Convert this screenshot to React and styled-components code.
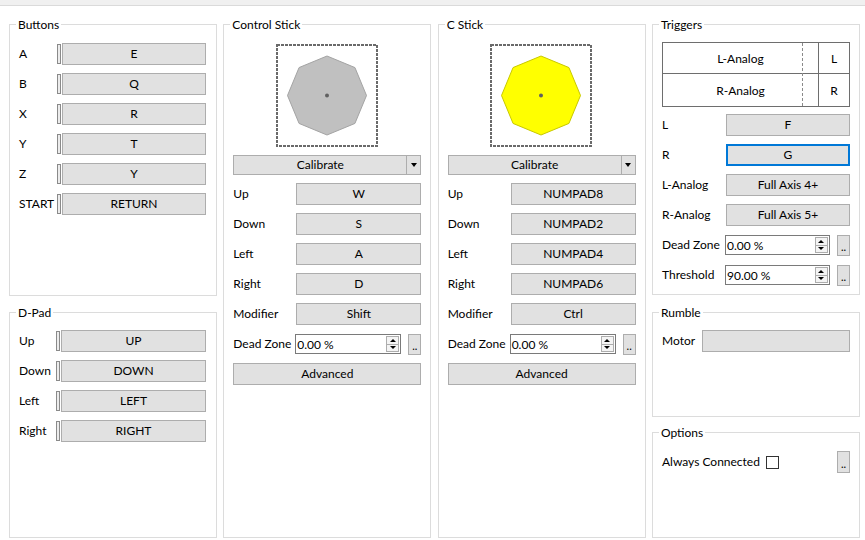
import React from "react";
import styled, { createGlobalStyle } from "styled-components";

const Global = createGlobalStyle`
  html, body { margin: 0; padding: 0; background: #fff; }
  body {
    font-family: Lato, "Liberation Sans", Arial, sans-serif;
    font-size: 12px;
    color: #000;
  }
`;

const Page = styled.div`
  width: 865px;
  height: 540px;
  background: #fff;
  overflow: hidden;
  display: flex;
  flex-direction: column;
`;

const TopBand = styled.div`
  height: 5px;
  flex: none;
  background: #f0f0f0;
  border-bottom: 1px solid #dadada;
`;

const Columns = styled.div`
  display: grid;
  grid-template-columns: repeat(4, 208px);
  column-gap: 6.33px;
  padding: 18px 0 0 9px;
  height: 514px;
`;

const Column = styled.div`
  display: flex;
  flex-direction: column;
  min-height: 0;
`;

const GroupBox = styled.section`
  position: relative;
  box-sizing: border-box;
  border: 1px solid #dcdcdc;
  margin-top: ${(p) => p.$mt || 0}px;
  padding: ${(p) => p.$pad || "18px 9px 0 9px"};
  ${(p) => (p.$h ? `height: ${p.$h}px; flex: none;` : "flex: 1;")}
  display: flex;
  flex-direction: column;
`;

const Title = styled.span`
  position: absolute;
  top: -8px;
  left: 6px;
  padding: 0 2px;
  background: #fff;
  line-height: 15px;
  white-space: nowrap;
`;

const ButtonGrid = styled.div`
  display: grid;
  grid-template-columns: ${(p) => p.$labelW}px 4px 1fr;
  column-gap: 1px;
  row-gap: 8px;
  grid-auto-rows: 22px;
  align-items: center;
`;

const Label = styled.span`
  display: block;
  white-space: nowrap;
  line-height: 22px;
`;

const Indicator = styled.div`
  height: 20px;
  box-sizing: border-box;
  border: 1px solid #8a8a8a;
  background: #ececec;
`;

const MapButton = styled.div`
  height: 22px;
  box-sizing: border-box;
  border: ${(p) => (p.$focus ? "2px solid #0078d7" : "1px solid #adadad")};
  background: #e1e1e1;
  display: flex;
  align-items: center;
  justify-content: center;
  padding-bottom: 1px;
  white-space: nowrap;
`;

const StickBody = styled.div`
  display: flex;
  flex-direction: column;
  gap: 8px;
`;

const StickView = styled.svg`
  align-self: center;
  display: block;
  margin-left: -1px;
`;

const Combo = styled.div`
  height: 20px;
  box-sizing: border-box;
  display: flex;
  border: 1px solid #adadad;
  background: #e1e1e1;
`;

const ComboText = styled.span`
  flex: 1;
  text-align: center;
  line-height: 18px;
`;

const ComboArrow = styled.span`
  width: 13px;
  border-left: 1px solid #adadad;
  display: flex;
  align-items: center;
  justify-content: center;
  &::after {
    content: "";
    border-left: 3.5px solid transparent;
    border-right: 3.5px solid transparent;
    border-top: 4px solid #000;
  }
`;

const FormGrid = styled.div`
  display: grid;
  grid-template-columns: ${(p) => p.$labelW}px 1fr;
  column-gap: 6px;
  row-gap: 8px;
  grid-auto-rows: 22px;
  align-items: center;
`;

const SpinRow = styled.div`
  display: flex;
  align-items: center;
  gap: 7px;
  height: 22px;
`;

const SpinBox = styled.div`
  flex: 1;
  height: 20px;
  box-sizing: border-box;
  margin-left: -1px;
  border: 1px solid #7a7a7a;
  background: #fff;
  display: flex;
  align-items: center;
  padding-left: 1px;
`;

const SpinValue = styled.span`
  flex: 1;
  white-space: nowrap;
`;

const SpinButtons = styled.div`
  width: 13px;
  height: 16px;
  box-sizing: border-box;
  margin-right: 1px;
  border: 1px solid #adadad;
  background: #f4f4f4;
  display: flex;
  flex-direction: column;
`;

const SpinHalf = styled.span`
  flex: 1;
  display: flex;
  align-items: center;
  justify-content: center;
  & + & { border-top: 1px solid #adadad; }
  &::after {
    content: "";
    border-left: 3px solid transparent;
    border-right: 3px solid transparent;
    ${(p) =>
      p.$up ? "border-bottom: 3px solid #000;" : "border-top: 3px solid #000;"}
  }
`;

const DotsButton = styled.div`
  width: 13px;
  height: ${(p) => p.$h || 21}px;
  box-sizing: border-box;
  border: 1px solid #adadad;
  background: #e1e1e1;
  display: flex;
  align-items: flex-end;
  justify-content: center;
  font-size: 11px;
  line-height: 12px;
  padding-bottom: 2px;
  flex: none;
`;

const TriggerTable = styled.div`
  position: relative;
  box-sizing: border-box;
  height: 65px;
  border: 1px solid #6e6e6e;
  display: grid;
  grid-template-columns: 1fr 31px;
  grid-template-rows: 31px 32px;
  margin-bottom: 7px;
  &::before {
    content: "";
    position: absolute;
    top: 0;
    bottom: 0;
    left: 139px;
    border-left: 1px dashed #8a8a8a;
  }
`;

const TriggerCell = styled.div`
  display: flex;
  align-items: center;
  justify-content: center;
  white-space: nowrap;
  padding-top: 1px;
  ${(p) => p.$right && "border-left: 1px solid #6e6e6e;"}
  ${(p) => p.$top && "border-bottom: 1px solid #6e6e6e;"}
`;

const OptionRow = styled.div`
  display: flex;
  align-items: center;
  height: 22px;
`;

const CheckBox = styled.span`
  width: 13px;
  height: 13px;
  box-sizing: border-box;
  border: 1px solid #333;
  background: #fff;
  margin-left: 6px;
  flex: none;
`;

const Spacer = styled.span`
  flex: 1;
`;

function Stick({ fill, stroke }) {
  const c = 51;
  const r = 39.5;
  const pts = Array.from({ length: 8 }, (_, i) => {
    const a = (i * Math.PI) / 4 - Math.PI / 2;
    return `${(c + r * Math.cos(a)).toFixed(2)},${(51.5 + r * Math.sin(a)).toFixed(2)}`;
  }).join(" ");
  return (
    <StickView width="102" height="103" viewBox="0 0 102 103">
      <rect x="1" y="1" width="100" height="101" fill="#fff" stroke="#6a6a6a" strokeWidth="2" strokeDasharray="3 1" />
      <polygon points={pts} fill={fill} stroke={stroke} strokeWidth="1" />
      <circle cx={c} cy="51.5" r="2" fill="#606060" />
    </StickView>
  );
}

function Spin({ value }) {
  return (
    <SpinRow>
      <SpinBox>
        <SpinValue>{value}</SpinValue>
        <SpinButtons>
          <SpinHalf $up />
          <SpinHalf />
        </SpinButtons>
      </SpinBox>
      <DotsButton>..</DotsButton>
    </SpinRow>
  );
}

function ButtonList({ rows, labelW }) {
  return (
    <ButtonGrid $labelW={labelW}>
      {rows.map(([l, v]) => (
        <React.Fragment key={l}>
          <Label>{l}</Label>
          <Indicator />
          <MapButton>{v}</MapButton>
        </React.Fragment>
      ))}
    </ButtonGrid>
  );
}

function StickGroup({ title, fill, stroke, keys, modifier }) {
  const dirs = ["Up", "Down", "Left", "Right"];
  return (
    <GroupBox $pad="19px 9px 0 9px">
      <Title>{title}</Title>
      <StickBody>
        <Stick fill={fill} stroke={stroke} />
        <Combo>
          <ComboText>Calibrate</ComboText>
          <ComboArrow />
        </Combo>
        <FormGrid $labelW={57}>
          {dirs.map((d, i) => (
            <React.Fragment key={d}>
              <Label>{d}</Label>
              <MapButton>{keys[i]}</MapButton>
            </React.Fragment>
          ))}
          <Label>Modifier</Label>
          <MapButton>{modifier}</MapButton>
          <Label>Dead Zone</Label>
          <Spin value="0.00 %" />
        </FormGrid>
        <MapButton>Advanced</MapButton>
      </StickBody>
    </GroupBox>
  );
}

export default function App() {
  return (
    <Page>
      <Global />
      <TopBand />
      <Columns>
        <Column>
          <GroupBox $h={272} $pad="18px 10px 0 9px">
            <Title>Buttons</Title>
            <ButtonList
              labelW={37}
              rows={[
                ["A", "E"],
                ["B", "Q"],
                ["X", "R"],
                ["Y", "T"],
                ["Z", "Y"],
                ["START", "RETURN"],
              ]}
            />
          </GroupBox>
          <GroupBox $mt={16} $pad="17px 10px 0 9px">
            <Title>D-Pad</Title>
            <ButtonList
              labelW={36}
              rows={[
                ["Up", "UP"],
                ["Down", "DOWN"],
                ["Left", "LEFT"],
                ["Right", "RIGHT"],
              ]}
            />
          </GroupBox>
        </Column>
        <Column>
          <StickGroup
            title="Control Stick"
            fill="#c0c0c0"
            stroke="#a4a4a4"
            keys={["W", "S", "A", "D"]}
            modifier="Shift"
          />
        </Column>
        <Column>
          <StickGroup
            title="C Stick"
            fill="#ffff00"
            stroke="#c8c800"
            keys={["NUMPAD8", "NUMPAD2", "NUMPAD4", "NUMPAD6"]}
            modifier="Ctrl"
          />
        </Column>
        <Column>
          <GroupBox $h={271} $pad="17px 9px 0 9px">
            <Title>Triggers</Title>
            <TriggerTable>
              <TriggerCell $top>L-Analog</TriggerCell>
              <TriggerCell $top $right>L</TriggerCell>
              <TriggerCell>R-Analog</TriggerCell>
              <TriggerCell $right>R</TriggerCell>
            </TriggerTable>
            <FormGrid $labelW={58}>
              <Label>L</Label>
              <MapButton>F</MapButton>
              <Label>R</Label>
              <MapButton $focus>G</MapButton>
              <Label>L-Analog</Label>
              <MapButton>Full Axis 4+</MapButton>
              <Label>R-Analog</Label>
              <MapButton>Full Axis 5+</MapButton>
              <Label>Dead Zone</Label>
              <Spin value="0.00 %" />
              <Label>Threshold</Label>
              <Spin value="90.00 %" />
            </FormGrid>
          </GroupBox>
          <GroupBox $h={105} $mt={17} $pad="17px 9px 0 9px">
            <Title>Rumble</Title>
            <FormGrid $labelW={34}>
              <Label>Motor</Label>
              <MapButton />
            </FormGrid>
          </GroupBox>
          <GroupBox $mt={15} $pad="18px 9px 0 9px">
            <Title>Options</Title>
            <OptionRow>
              <Label>Always Connected</Label>
              <CheckBox />
              <Spacer />
              <DotsButton $h={22}>..</DotsButton>
            </OptionRow>
          </GroupBox>
        </Column>
      </Columns>
    </Page>
  );
}
